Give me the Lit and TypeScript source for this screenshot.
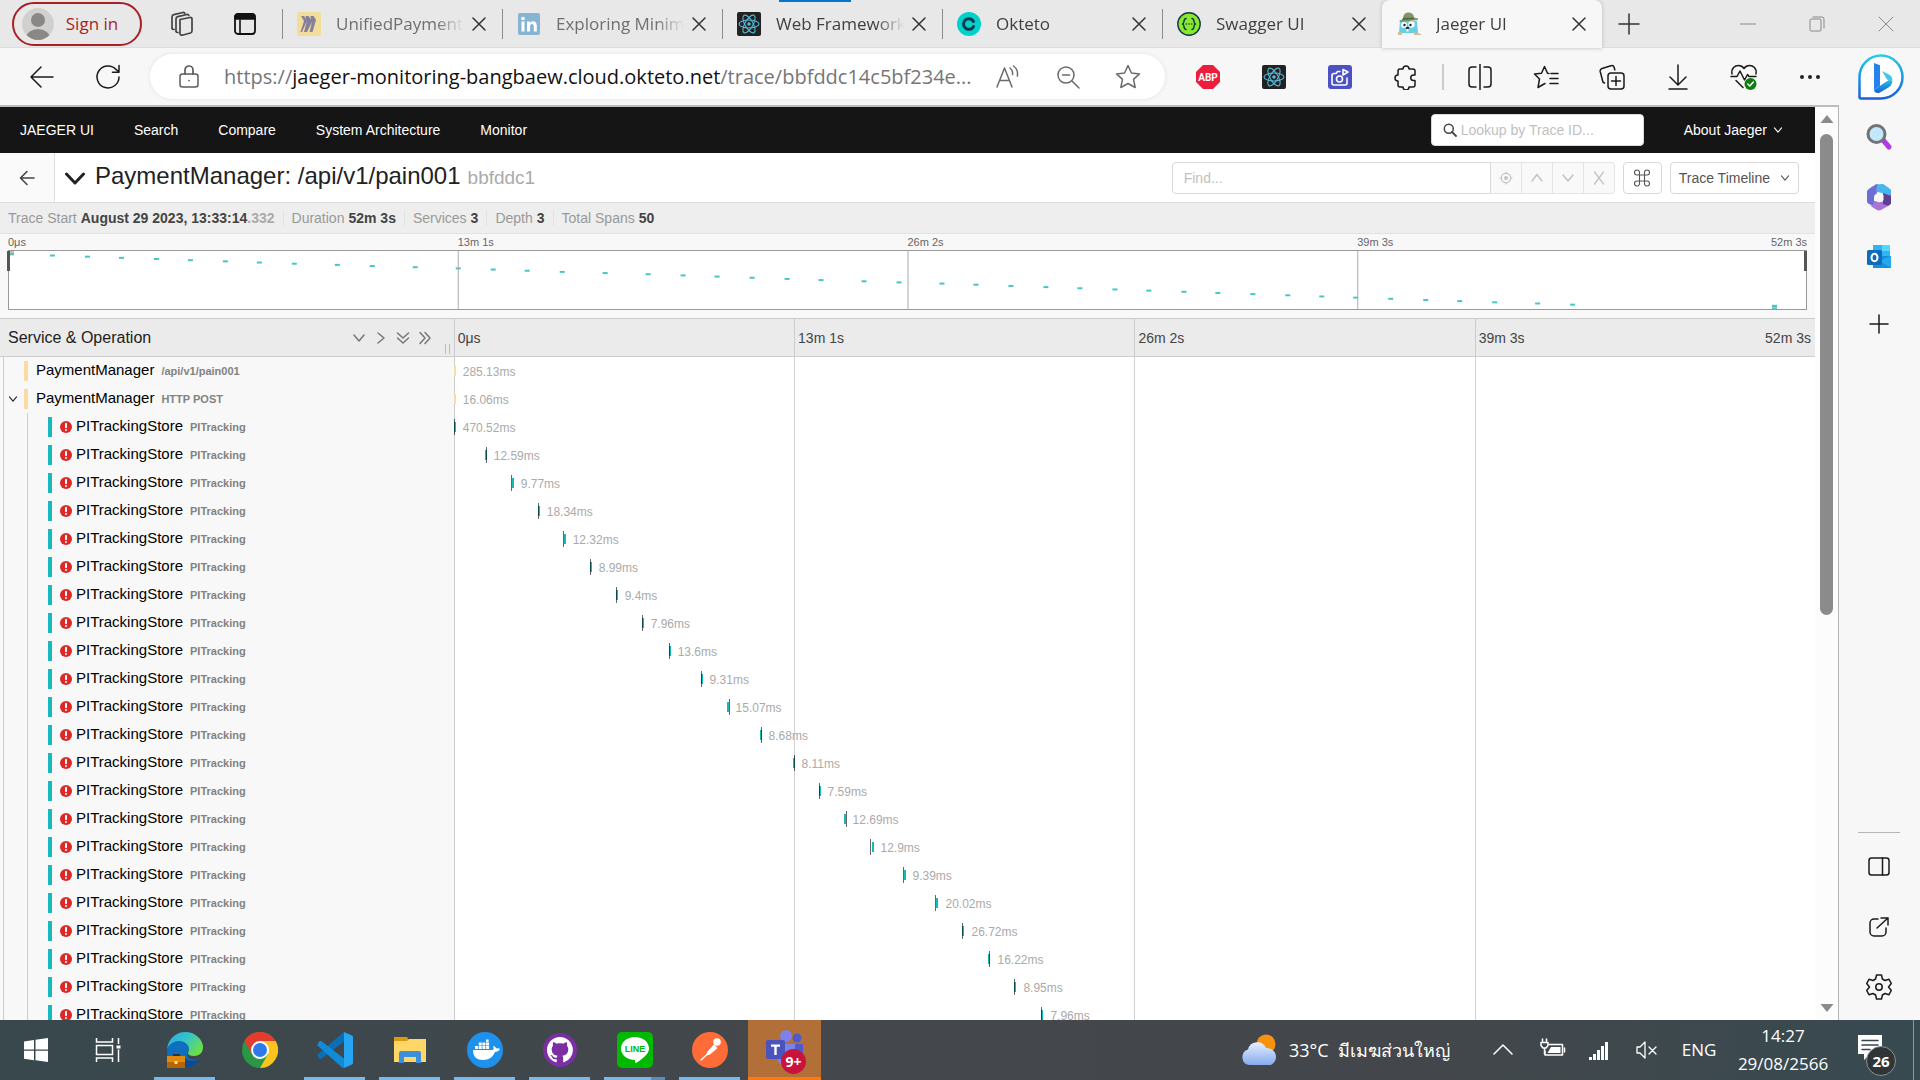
import { LitElement, html, svg, css, nothing, type TemplateResult } from "lit";
import { customElement, property } from "lit/decorators.js";
import { classMap } from "lit/directives/class-map.js";

const icon = (size: number, box: number, body: TemplateResult) =>
  html`<svg width=${size} height=${size} viewBox="0 0 ${box} ${box}" fill="none" stroke="currentColor" stroke-width="1.5" stroke-linecap="round" stroke-linejoin="round" aria-hidden="true">${body}</svg>`;

const reactMark = (bg: string) => svg`
  <rect width="24" height="24" rx="2" fill=${bg} stroke="none"/>
  <g stroke="#58b8d8" stroke-width="1.1">
    <ellipse cx="12" cy="12" rx="10" ry="4"/>
    <ellipse cx="12" cy="12" rx="10" ry="4" transform="rotate(60 12 12)"/>
    <ellipse cx="12" cy="12" rx="10" ry="4" transform="rotate(120 12 12)"/>
  </g>
  <circle cx="12" cy="12" r="1.8" fill="#58b8d8" stroke="none"/>`;

const cross = svg`<path d="M1 1L13 13M13 1L1 13"/>`;
const chevDown = svg`<path d="M2 4L7 10L12 4"/>`;

const icons = {
  miro: icon(24, 24, svg`<rect width="24" height="24" rx="2" fill="#f2dd9a" stroke="none"/><path d="M4 4h3l2 3-.5-3h3l2.3 3.5L13.400 4h3.200L19 8l-3.500 12h-3l2.500-10-5 10h-3l2.800-11L5 20H3.500L7 9z" fill="#85809c" stroke="none"/>`),
  linkedin: icon(24, 24, svg`<rect x="1" y="1" width="22" height="22" rx="2" fill="#86b5d2" stroke="none"/><g fill="#fff" stroke="none"><circle cx="6" cy="6.500" r="1.800"/><rect x="4.500" y="9.500" width="3" height="10"/><path d="M10 9.500h3v1.400c1.700-2.600 6.800-2.200 6.800 2.600v6h-3v-5.300c0-3-3.700-2.800-3.700 0v5.300H10z"/></g>`),
  react: icon(24, 24, reactMark("#222")),
  okteto: icon(24, 24, svg`<circle cx="12" cy="12" r="12" fill="#00d1ca" stroke="none"/><path d="M16.500 9.500A5.300 5.300 0 1 0 16.500 14.500" stroke="#10374f" stroke-width="3"/>`),
  swagger: icon(24, 24, svg`<circle cx="12" cy="12" r="11.200" fill="#85ea2d" stroke="#173647" stroke-width="1.400"/><g stroke="#173647" stroke-width="1.500"><path d="M9 6.500c-3 0-1 5-3.500 5.500 2.500.500.500 5.500 3.500 5.500M15 6.500c3 0 1 5 3.500 5.500-2.500.500-.500 5.500-3.500 5.500"/><path d="M9.300 12h.1M12 12h.1M14.700 12h.1"/></g>`),
  jaeger: icon(24, 24, svg`<g stroke="none"><path d="M3 9h17l1 12H2z" fill="#65cfe4"/><path d="M1 20h4v3H1zM17 20l7 2v1h-7z" fill="#d3bb93"/><path d="M6 7c0-4 2-7 6-6.500 4 .500 5 3 5 5l4 1v1.500L4 10l-2-1z" fill="#7f9766"/><path d="M6 6l11-.500v1.800L5 8z" fill="#54694b"/><circle cx="7" cy="13" r="3" fill="#fff"/><circle cx="14.500" cy="12.500" r="3.200" fill="#fff"/><circle cx="7.500" cy="13" r="1.200" fill="#222"/><circle cx="13.500" cy="13" r="1.200" fill="#222"/><ellipse cx="10.500" cy="16" rx="1.800" ry="1.200" fill="#333"/><path d="M9.500 17h2v2.500h-2z" fill="#fff"/></g>`),
  workspaces: icon(28, 28, svg`<g stroke="#444" stroke-width="1.700"><path d="M13 9.500l10-2c1-.200 2 .500 2 1.500v12c0 1-.500 1.500-1.500 2L16 25c-1.500.500-3 0-3-1.500z"/><path d="M9 20.500V9c0-1 .500-2 1.800-2.300L20 4.500c1-.200 1.500 0 1.800 1"/><path d="M5 18V7c0-1 .500-2 1.800-2.300L16 2.500c1-.200 1.500 0 1.800 1"/><path d="M5 18.500c.500 1 1.500 1 2 1M9 21.500c.500 1 1.500 1 2 1"/></g>`),
  tabActions: icon(24, 24, svg`<rect x="2" y="2" width="20" height="20" rx="3" stroke="#111" stroke-width="1.800"/><path d="M2 7V5a3 3 0 0 1 3-3h14a3 3 0 0 1 3 3v2z" fill="#111" stroke="#111"/><path d="M7 8v14" stroke="#111" stroke-width="1.600"/>`),
  close: icon(14, 14, cross),
  clear: icon(14, 14, svg`<path d="M2.500 1l9 12M11.500 1l-9 12" stroke-width="1.300"/>`),
  plus: icon(22, 22, svg`<path d="M11 1v20M1 11h20"/>`),
  minimize: icon(16, 16, svg`<path d="M0 8h16" stroke-width="1"/>`),
  restore: icon(16, 16, svg`<path d="M1 4a1 1 0 0 1 1-1h9a1 1 0 0 1 1 1v10a1 1 0 0 1-1 1H2a1 1 0 0 1-1-1zM4 1h9a2 2 0 0 1 2 2v9" stroke-width="1"/>`),
  winClose: icon(16, 16, svg`<path d="M1 1L15 15M15 1L1 15" stroke-width="1"/>`),
  back: icon(26, 26, svg`<path d="M24 13H2M12 3L2 13l10 10"/>`),
  reload: icon(28, 28, svg`<path d="M25 14a11 11 0 1 1-3-7.600L25 9M25 2.500V9.300H18.500"/>`),
  lock: icon(26, 26, svg`<g stroke="#5c5c5c"><rect x="4" y="10" width="18" height="13" rx="2.500"/><path d="M9 10V6a4 4 0 0 1 8 0v4M13 16.500h.1" stroke-width="1.700"/></g>`),
  readAloud: icon(26, 26, svg`<g stroke="#6b6b6b"><path d="M2 23L9.500 4 17 23M5 16.500h9"/><path d="M15 4c2 1.500 3 4 2.500 6.500M18.500 2c3.500 2.500 4.500 6.500 3.800 10"/></g>`),
  zoomOut: icon(26, 26, svg`<g stroke="#6b6b6b"><circle cx="11" cy="11" r="8"/><path d="M17 17l7 7M7.500 11h7"/></g>`),
  star: icon(28, 28, svg`<path stroke="#6b6b6b" d="M14 2.500l3.400 7.500 8.100.900-6 5.500 1.700 8.100L14 20.500l-7.200 4 1.700-8.100-6-5.500 8.100-.900z"/>`),
  abp: icon(26, 26, svg`<path d="M8 1h10l7 7v10l-7 7H8l-7-7V8z" fill="#ee1c3c" stroke="none"/><text x="13" y="17" font-size="10" font-weight="bold" font-family="Roboto, sans-serif" text-anchor="middle" fill="#fff" stroke="none">ABP</text>`),
  shot: icon(24, 24, svg`<rect width="24" height="24" rx="3" fill="#4c52c4" stroke="none"/><g stroke="#fff" stroke-width="1.600"><path d="M12 6.500H9.500L8 8.500H6a2 2 0 0 0-2 2V18a2 2 0 0 0 2 2h11a2 2 0 0 0 2-2v-5"/><circle cx="11.500" cy="14" r="3"/><path d="M15 4.500l5 2.500-5 3z"/></g>`),
  puzzle: icon(26, 26, svg`<path d="M10 5a3 3 0 0 1 6 0h4a2 2 0 0 1 2 2v4h-1.500a2.500 2.500 0 0 0 0 5.500H22V21a2 2 0 0 1-2 2h-4a3 3 0 0 1-6 0H7a2 2 0 0 1-2-2v-4a3 3 0 0 1 0-6V7a2 2 0 0 1 2-2z"/>`),
  split: icon(26, 26, svg`<path d="M9 3H5a3 3 0 0 0-3 3v14a3 3 0 0 0 3 3h4M17 3h4a3 3 0 0 1 3 3v14a3 3 0 0 1-3 3h-4M13 0v26"/>`),
  favorites: icon(26, 26, svg`<path d="M16 9.500l-1.500-.200L11.500 2.500 8.500 9.300 1.500 10l5 5-1.500 8.500 6-3.500 1-.500M18 9.500h7M17 14.500h8M17 19.500h8"/>`),
  collections: icon(26, 26, svg`<rect x="9" y="9" width="16" height="16" rx="3"/><path d="M17 12.500v9M12.500 17h9M5.500 19l-1.500-.700L1.200 7.500C.900 6 1.500 5 3 4.500l9-2.800c1.500-.400 2.700.200 3.100 1.500l.700 2.600"/>`),
  download: icon(26, 26, svg`<path d="M13 1v19M5 13l8 8 8-8M4 25h18"/>`),
  heart: icon(28, 28, svg`<path d="M2 11C1 5 5 2.500 8.500 2.500c2.500 0 4.500 1.500 5.500 3 1-1.500 3-3 5.500-3C23 2.500 27 5 26 11M1 13.500h6L10 8l4.500 9 3-5.500 1.500 2H26M6 17.500l7 7"/><circle cx="20.500" cy="21" r="6" fill="#107c10" stroke="none"/><path d="M17.800 21l2 2 3.500-4" stroke="#fff"/>`),
  dots: icon(24, 24, svg`<g fill="#222" stroke="none"><circle cx="4" cy="12" r="2"/><circle cx="12" cy="12" r="2"/><circle cx="20" cy="12" r="2"/></g>`),
  bing: icon(46, 46, svg`<defs><linearGradient id="bg1" x1="0" y1="0" x2="0" y2="1"><stop offset="0" stop-color="#23cde8"/><stop offset="1" stop-color="#1b5fdc"/></linearGradient></defs><path d="M1.500 43V23A21.500 21.500 0 1 1 23 44.500H3A1.500 1.500 0 0 1 1.500 43z" fill="#fff" stroke="url(#bg1)" stroke-width="2.500"/><g stroke="none"><path d="M16 9l6 2.200v20.500l-6 4.300z" fill="#2582ee"/><path d="M16 36l6-4.300L34 24c1 5-1 8-3.500 9.500L22 38.500c-3 1.300-5.500 0-6-2.500z" fill="url(#bg1)"/><path d="M24 17l7 3.500c3 1.700 4 4 2.500 7.500L29 25.500z" fill="#47c7e8"/></g>`),
  sideSearch: icon(28, 28, svg`<path d="M18 17l6 7" stroke="#b13be0" stroke-width="5"/><circle cx="11.500" cy="11" r="8.500" fill="#c4e8fa" stroke="#707377" stroke-width="3"/>`),
  m365: icon(28, 28, svg`<g stroke="none"><path d="M10 1.500L18 1c1 .500 7 4.500 8 6v9l-9-6-5-1z" fill="#47b5ee"/><path d="M2 8.500C2 7 9 1.500 13 1c-2 3-1 7-1 9l-3 4v9l-5-2c-2-1-2-2-2-4z" fill="#6a6fd6"/><path d="M9 18l8 1 9-9v9c0 2-1 3-2 3.500L16 27c-2 .700-3 .500-5-.500l-6-4c3 .500 4-1 4-4.500z" fill="#a974d6"/><path d="M18 10l8 3v7c-1 3-4 3-8 1z" fill="#5f3e96"/><path d="M14 9.500l4.500 2.500v5L14 19.500 9.500 17v-5z" fill="#f7f7f7"/></g>`),
  outlook: icon(26, 26, svg`<g stroke="none"><rect x="7" y="1" width="17" height="12" fill="#33b4ee"/><path d="M7 12h18v12H7z" fill="#1490df"/><path d="M25 12v12L13 17z" fill="#28a8ea"/><rect x="16" y="1" width="8" height="6" fill="#50d9ff"/><rect x="1" y="6" width="15" height="15" rx="1.500" fill="#0f6cbd"/></g><ellipse cx="8.500" cy="13.500" rx="3" ry="3.700" stroke="#fff" stroke-width="2"/>`),
  sidePlus: icon(20, 20, svg`<path d="M10 1v18M1 10h18"/>`),
  panel: icon(24, 24, svg`<rect x="2" y="3" width="20" height="17" rx="2.500"/><path d="M15.500 3v17"/>`),
  external: icon(24, 24, svg`<path d="M11 4H7a4 4 0 0 0-4 4v9a4 4 0 0 0 4 4h8a4 4 0 0 0 4-4v-4M14 3h7v7M21 3L10 13"/>`),
  gear: icon(28, 28, svg`<path d="M11.500 2h5l.900 4 2.600 1.500 4-1.200 2.300 4.200-2.800 3.500 2.800 3.500-2.300 4.200-4-1.200-2.600 1.500-.900 4h-5l-.900-4L8 20.500l-4 1.200-2.300-4.200L4.500 14 1.700 10.500 4 6.300l4 1.200L10.600 6z"/><circle cx="14" cy="14" r="3.200"/>`),
  appBack: icon(16, 16, svg`<path d="M15 8H2M8 1.500L1.500 8 8 14.500" stroke-width="1.600"/>`),
  bigChev: icon(20, 20, svg`<path d="M1.500 6L10 15l8.500-9" stroke-width="3"/>`),
  lens: icon(14, 14, svg`<circle cx="5.800" cy="5.800" r="4.500" stroke="#444"/><path d="M9 9l4 4" stroke="#444" stroke-width="1.800"/>`),
  chev: icon(10, 14, chevDown),
  down: icon(14, 14, chevDown),
  up: icon(14, 14, svg`<path d="M2 10L7 3.500 12 10"/>`),
  right: icon(14, 14, svg`<path d="M4 2l6 5-6 5"/>`),
  dblDown: icon(14, 14, svg`<path d="M1.500 2L7 7l5.500-5M1.500 7L7 12l5.500-5"/>`),
  dblRight: icon(14, 14, svg`<path d="M2 1.500L7 7l-5 5.500M7 1.500L12 7l-5 5.500"/>`),
  aim: icon(14, 14, svg`<circle cx="7" cy="7" r="4.700" stroke-width="1.200"/><circle cx="7" cy="7" r="2" fill="currentColor" stroke="none"/><path d="M7 1v1.500M7 11.500V13M1 7h1.500M11.500 7H13" stroke-width="1.200"/>`),
  error: icon(12, 12, svg`<circle cx="6" cy="6" r="6" fill="#db2828" stroke="none"/><path d="M6 2.800v3.400M6 8.900v.1" stroke="#fff" stroke-width="1.900"/>`),
  command: icon(18, 18, svg`<path d="M6 6H4a2.500 2.500 0 1 1 2.500-2.500v11A2.500 2.500 0 1 1 4 12h10a2.500 2.500 0 1 1-2.500 2.500v-11A2.500 2.500 0 1 1 14 6z" stroke-width="1.100"/>`),
  arrowUp: icon(14, 14, svg`<path d="M7 3l6.500 8H.500z" fill="#8b8b8b" stroke="none"/>`),
  arrowDown: icon(14, 14, svg`<path d="M7 11l6.500-8H.500z" fill="#8b8b8b" stroke="none"/>`),
  windows: icon(26, 26, svg`<path d="M1 4.500l10-1.500v9.500H1zM12.500 2.800L25 1v11.500H12.500zM1 13.800h10v9.500L1 21.800zM12.500 13.800H25V25l-12.500-1.800z" fill="#fff" stroke="none"/>`),
  taskView: icon(26, 26, svg`<g stroke="#fff" stroke-linecap="butt" stroke-linejoin="miter"><path d="M1.500 1v4h16V1M1.500 25v-4h16v4M1.500 8.500h16v9h-16zM23.500 1v6M23.500 12.500V25"/><path d="M21.500 8.500h4v3h-4z" fill="#fff" stroke="none"/></g>`),
  edge: icon(36, 36, svg`<defs><linearGradient id="eg1" x1="0" y1="0" x2="1" y2=".6"><stop offset="0" stop-color="#2ba6e8"/><stop offset=".5" stop-color="#33c4cc"/><stop offset="1" stop-color="#6be048"/></linearGradient></defs><g stroke="none"><path d="M0 20C0 12 6 9 12 9c7 0 10 4 10 8 0 2-2 3-2 6 0 4 6 6 13 4-3 6-9 9-15 9C8 36 0 29 0 20z" fill="#0e6fc0"/><path d="M18 26c4 4 10 3 15.500 1C30 33 24 36 18 36z" fill="#104a8e"/><path d="M0 17C1 7 9 0 18 0c11 0 18 8 18 15 0 6-4 9-9 9-4 0-6-1-6-3 0-1 1-1 1-4 0-4-4-8-10-8-5 0-10 3-12 8z" fill="url(#eg1)"/><path d="M6 24v-2h7v2" fill="#333"/><rect y="24" width="18" height="12" fill="#b86409"/><rect y="24" width="18" height="6" fill="#e08a0d"/><rect x="7.500" y="29" width="3" height="3" fill="#ffe36b"/></g>`),
  chrome: icon(36, 36, svg`<g stroke="none"><circle cx="18" cy="18" r="18" fill="#2a9745"/><path d="M2.400 9A18 18 0 0 1 33.600 9H18L10.200 22.500z" fill="#e33b2e"/><path d="M33.600 9A18 18 0 0 1 18 36l7.800-13.500L18 9z" fill="#fcc31e"/><circle cx="18" cy="18" r="9" fill="#fff"/><circle cx="18" cy="18" r="7" fill="#2f7ae9"/></g>`),
  vscode: icon(36, 36, svg`<g stroke="none"><path d="M1 24.500c-1-.900-1-1.800 0-2.600L27 0v9.500L4.500 26.700c-.800.500-1.500.400-2 0z" fill="#0a6fb5"/><path d="M1 11.500c-1 .900-1 1.800 0 2.600L25 35.500c1 .700 2 .500 2 .500V26.500L4.500 9.300c-.800-.500-1.500-.400-2 0z" fill="#0f8bd8"/><path d="M27 0l8 3.500c.600.300 1 .900 1 1.500v26c0 .600-.400 1.200-1 1.500L27 36z" fill="#26a5f2"/></g>`),
  explorer: icon(36, 36, svg`<g stroke="none"><path d="M2 5h13l2 3v5H2z" fill="#dc9a0a"/><path d="M2 9h13l2-2h17v23H2z" fill="#ffd668"/><path d="M7 31V21a2 2 0 0 1 2-2h18a2 2 0 0 1 2 2v10h-5v-6H12v6z" fill="#3b8fdc"/></g>`),
  docker: icon(36, 36, svg`<g stroke="none"><circle cx="18" cy="18" r="18" fill="#1d91ec"/><path d="M6 18h20c1-1 .500-3 0-4 2 0 3 1.500 3 2.500 1.500-.300 3-.300 4 .500-1 2-3 3-5 3-2 5-6 8-12 8-6 0-10-3-10-10z" fill="#fff"/><path d="M8 14h3v3H8zM11.700 14h3v3h-3zM15.400 14h3v3h-3zM19.100 14h3v3h-3zM11.700 10.500h3v3h-3zM15.400 10.500h3v3h-3zM19.100 10.500h3v3h-3zM19.100 7.500h2.500v2.500h-2.500z" fill="#fff"/></g>`),
  github: icon(34, 34, svg`<circle cx="17" cy="17" r="17" fill="#7b2fa3" stroke="none"/><path transform="translate(4 4) scale(1.620)" fill="#fff" stroke="none" d="M8 0C3.580 0 0 3.580 0 8c0 3.540 2.290 6.530 5.470 7.590.4.070.55-.17.55-.38 0-.19-.01-.82-.01-1.490-2.010.37-2.530-.49-2.690-.94-.09-.23-.48-.94-.82-1.130-.28-.15-.68-.52-.01-.53.63-.01 1.080.58 1.230.82.72 1.210 1.870.87 2.330.66.07-.52.28-.87.51-1.070-1.780-.2-3.640-.89-3.640-3.950 0-.87.31-1.590.82-2.150-.08-.2-.36-1.020.08-2.120 0 0 .67-.21 2.200.82.64-.18 1.320-.27 2-.27s1.360.09 2 .27c1.530-1.040 2.200-.82 2.200-.82.44 1.100.16 1.920.08 2.120.51.56.82 1.270.82 2.150 0 3.070-1.870 3.750-3.650 3.950.29.25.54.73.54 1.480 0 1.070-.01 1.930-.01 2.200 0 .21.15.46.55.38A8.010 8.010 0 0 0 16 8c0-4.420-3.580-8-8-8z"/>`),
  line: icon(36, 36, svg`<g stroke="none"><rect width="36" height="36" rx="5" fill="#00b900"/><path d="M18 5c8 0 14 5 14 11.500 0 5-5 9.500-13 14.500-1 .500-1-1-1-3C10 28 4 23 4 16.500 4 10 10 5 18 5z" fill="#fff"/><text x="18" y="20" font-size="9" font-weight="bold" font-family="Liberation Sans, sans-serif" text-anchor="middle" fill="#00b900">LINE</text></g>`),
  postman: icon(36, 36, svg`<circle cx="18" cy="18" r="18" fill="#ff6c37" stroke="none"/><g stroke="#fff"><circle cx="25" cy="10" r="3" fill="#fff"/><path d="M22 13.500L16 20l-1 2.500 2.500-.500 7-6z" fill="#fff"/><path d="M15 22.500L9 28"/></g>`),
  teams: icon(42, 42, svg`<g stroke="none"><circle cx="22" cy="7" r="6" fill="#7b83eb"/><circle cx="33" cy="9" r="4.500" fill="#5059c9"/><path d="M28 15h11v10a7 7 0 0 1-9 6z" fill="#5059c9"/><path d="M13 15h18v13a9 9 0 0 1-18 0z" fill="#7b83eb"/><rect x="2" y="11" width="19" height="19" rx="2" fill="#4b53bc"/><path d="M7 15.500h9v2.300h-3.300V26h-2.400v-8.200H7z" fill="#fff"/></g>`),
  weather: icon(38, 38, svg`<defs><linearGradient id="wc" x1="0" y1="0" x2="0" y2="1"><stop offset="0" stop-color="#e6f0fd"/><stop offset="1" stop-color="#86abef"/></linearGradient></defs><g stroke="none"><circle cx="26" cy="13" r="9.500" fill="#f6920c"/><path d="M9 34a8 8 0 0 1-1-15.500A9.500 9.500 0 0 1 26 17a9 9 0 0 1 5 17z" fill="url(#wc)"/></g>`),
  trayUp: icon(20, 20, svg`<path d="M1 14L10 5l9 9" stroke="#fff"/>`),
  battery: icon(26, 26, svg`<g stroke="#fff"><path d="M9 7.500h13.500v10.500H5v-4" /><path d="M24.500 11v4"/><path d="M11 10h9.500v6H7.500z" fill="#fff" stroke="none"/><path d="M2.500 2v3M6.500 2v3M1 5.500h7v3L6 11H3L1 8.500zM4.500 11v6"/></g>`),
  signal: icon(20, 20, svg`<path d="M0 17h3v3H0zM4 14h3v6H4zM8 10h3v10H8zM12 6h3v14h-3zM16 2h3v18h-3z" fill="#fff" stroke="none"/>`),
  mute: icon(22, 22, svg`<path d="M1 8h3l5-5v16l-5-5H1zM13 8l7 7M20 8l-7 7" stroke="#fff" stroke-width="1.300"/>`),
  notes: icon(26, 26, svg`<path d="M1 1h24v19H13l-6 6v-6H1z" fill="#fff" stroke="none"/><path d="M5 6.500h16M5 11h16M5 15.500h8" stroke="#3a464b"/>`),
};

type IconName = keyof typeof icons;

interface BrowserTab { title: string; icon: IconName; dim?: boolean; active?: boolean }

const tabs: BrowserTab[] = [
  { title: "UnifiedPayment", icon: "miro", dim: true },
  { title: "Exploring Minim", icon: "linkedin", dim: true },
  { title: "Web Framework", icon: "react" },
  { title: "Okteto", icon: "okteto" },
  { title: "Swagger UI", icon: "swagger" },
  { title: "Jaeger UI", icon: "jaeger", active: true },
];

interface Span { service: string; op: string; duration: string; start: number; log?: number; depth: number; open?: boolean }

/* start and log are positions on the time axis, in 1/1361 of the trace duration. */
const child = (start: number, log: number, duration: string): Span =>
  ({ service: "PITrackingStore", op: "PITracking", duration, start, log, depth: 2 });

const spans: Span[] = [
  { service: "PaymentManager", op: "/api/v1/pain001", duration: "285.13ms", start: 0, depth: 0 },
  { service: "PaymentManager", op: "HTTP POST", duration: "16.06ms", start: 0, depth: 0, open: true },
  child(0, 0, "470.52ms"), child(31, 32, "12.59ms"), child(58, 57, "9.77ms"), child(84, 84, "18.34ms"),
  child(110, 109, "12.32ms"), child(136, 136, "8.99ms"), child(162, 162, "9.4ms"), child(188, 188, "7.96ms"),
  child(215, 215, "13.6ms"), child(247, 247, "9.31ms"), child(273, 275, "15.07ms"), child(306, 307, "8.68ms"),
  child(339, 340, "8.11ms"), child(365, 365, "7.59ms"), child(390, 392, "12.69ms"), child(418, 416, "12.9ms"),
  child(450, 449, "9.39ms"), child(483, 482, "20.02ms"), child(509, 509, "26.72ms"), child(535, 536, "16.22ms"),
  child(561, 561, "8.95ms"), child(588, 588, "7.96ms"),
];

const AXIS = 1361;
const ticks = ["0μs", "13m 1s", "26m 2s", "39m 3s"];

/* Start of each span in the minimap, in 1/1798 of the trace duration. */
const miniStarts = [
  0, 0, 0, 41, 76, 110, 145, 179, 214, 248, 283, 326, 361, 404, 447, 482, 516, 551, 594,
  637, 672, 706, 741, 776, 810, 853, 888, 931, 965, 1000, 1035, 1069, 1104, 1138, 1173, 1207, 1242,
  1277, 1311, 1345, 1380, 1415, 1449, 1484, 1527, 1562, 1764, 1764, 1764, 1764,
];

@customElement("browser-tab")
class BrowserTabElement extends LitElement {
  @property({ attribute: false }) tab!: BrowserTab;

  static styles = css`
    :host { display: flex; flex: 0 1 220px; min-width: 0; align-items: center; }
    .tab { display: flex; flex: 1; min-width: 0; align-items: center; height: 48px; padding-right: 16px; box-sizing: border-box; }
    .tab.active { background: #f7f7f7; border-radius: 8px 8px 0 0; box-shadow: 0 0 4px #bbb; }
    .rule { width: 1px; height: 30px; background: #8d8d8d; margin-right: 14px; }
    .active .rule { background: none; }
    .link { display: flex; flex: 1; min-width: 0; align-items: center; gap: 15px; color: #3f3f3f; text-decoration: none; }
    .title { flex: 1; min-width: 0; overflow: hidden; white-space: nowrap; mask-image: linear-gradient(90deg, #000 calc(100% - 28px), transparent); }
    .dim .title { color: #6f6f6f; }
    .close { display: flex; margin-left: 8px; padding: 0; border: 0; background: none; color: #333; }
  `;

  render() {
    const t = this.tab;
    return html`<div class=${classMap({ tab: true, active: !!t.active, dim: !!t.dim })}>
      <span class="rule"></span>
      <a class="link" href="#">${icons[t.icon]}<span class="title">${t.title}</span></a>
      <button class="close" aria-label="Close ${t.title}">${icons.close}</button>
    </div>`;
  }
}

@customElement("span-row")
class SpanRow extends LitElement {
  @property({ attribute: false }) span!: Span;

  static styles = css`
    :host { display: grid; grid-template-columns: 1fr 3fr; height: 28px; flex: none; }
    .name { display: flex; align-items: center; min-width: 0; background: #f8f8f8; padding-left: 3px; white-space: nowrap; }
    .guide { display: flex; align-items: center; width: 20px; height: 28px; border-left: 1px solid #ccc; }
    .inner { margin-left: 3px; }
    .toggle { display: flex; margin-left: 4px; padding: 0; border: 0; background: none; color: #222; }
    .label { display: flex; align-items: baseline; gap: 7px; padding: 0 0 2px 8px; color: #000; font: 15px/20px "Liberation Sans", Arial, sans-serif; text-decoration: none; }
    .bar { width: 4px; height: 20px; background: #17b8be; }
    .root .bar { background: #f8dca1; }
    .error { display: flex; margin-left: 8px; }
    .error + .label { padding-left: 4px; }
    .op { color: #828282; font-size: 11px; font-weight: bold; }
    .view { position: relative; display: flex; align-items: center; border-left: 1px solid #ccc; color: #aaa; font-size: 12px; }
    .time { margin-left: var(--at); padding: 1px 0 0 8px; }
    .mark { position: absolute; left: calc(var(--at) - 1px); top: 9px; width: 2px; height: 10px; background: #17b8be; }
    .root .mark { background: #f8dca1; }
    .log { position: absolute; left: calc(var(--log) - 1px); top: 6px; width: 1px; height: 16px; background: rgba(0, 0, 0, 0.6); }
  `;

  render() {
    const s = this.span;
    const at = `--at:${(s.start / AXIS) * 100}%;--log:${((s.log ?? 0) / AXIS) * 100}%`;
    const root = s.depth === 0;
    return html`
      <div class=${classMap({ name: true, root })}>
        <span class="guide">${s.open ? html`<button class="toggle" aria-label="Collapse children">${icons.chev}</button>` : nothing}</span>
        ${root ? nothing : html`<span class="guide inner"></span>`}
        <span class="bar"></span>
        ${root ? nothing : html`<span class="error">${icons.error}</span>`}
        <a class="label" href="#"><span>${s.service}</span><span class="op">${s.op}</span></a>
      </div>
      <div class=${classMap({ view: true, root })} style=${at}>
        <span class="mark"></span>
        ${s.log === undefined ? nothing : html`<span class="log"></span>`}
        <span class="time">${s.duration}</span>
      </div>`;
  }
}

@customElement("trace-page")
class TracePage extends LitElement {
  static styles = css`
    :host { display: flex; flex-direction: column; flex: 1; min-width: 0; min-height: 0; overflow: hidden; background: #fff; font: 14px/20px "Liberation Sans", Arial, sans-serif; color: #222; }
    a { color: inherit; text-decoration: none; }
    button, input { font: inherit; box-sizing: border-box; }
    .nav { display: flex; align-items: center; flex: none; height: 46px; background: #151515; color: #fff; }
    .nav a { padding: 0 20px; }
    .nav .about { display: flex; align-items: center; gap: 6px; padding: 0 32px 0 40px; }
    .grow { flex: 1; }
    .lookup { display: flex; align-items: center; gap: 4px; width: 213px; height: 32px; padding: 0 11px; box-sizing: border-box; border: 1px solid #d9d9d9; border-radius: 4px; background: #fff; }
    .lookup input { flex: 1; min-width: 0; padding: 0; border: 0; background: none; }
    input::placeholder { color: #bfbfbf; opacity: 1; }
    .head { display: flex; align-items: center; flex: none; height: 50px; box-sizing: border-box; border-bottom: 1px solid #ddd; padding-right: 16px; }
    .back { display: flex; align-items: center; justify-content: center; align-self: stretch; width: 54px; border-right: 1px solid #ddd; background: #fafafa; color: #444; }
    h1 { display: flex; align-items: baseline; flex: 1; gap: 7px; margin: 0; font-size: 24px; line-height: 32px; font-weight: normal; padding-bottom: 1px; }
    h1 small { font-size: 19px; color: #aaa; }
    .expand { display: flex; border: 0; padding: 0 10px; background: none; color: #222; }
    .find { display: flex; width: 443px; height: 32px; margin-right: 8px; }
    .find input { flex: 1; min-width: 0; padding: 0 11px; border: 1px solid #d9d9d9; border-radius: 4px 0 0 4px; }
    .find button { display: flex; align-items: center; justify-content: center; width: 31px; padding: 0; border: 1px solid #e4e4e4; border-left: 0; background: #f9f9f9; color: #c4c4c4; }
    .find button:last-child { border-radius: 0 4px 4px 0; }
    .tool { display: flex; align-items: center; justify-content: center; gap: 10px; height: 32px; padding: 0 8px; border: 1px solid #d9d9d9; border-radius: 4px; background: #fff; color: #555; }
    .keys { width: 39px; margin-right: 8px; }
    .facts { display: flex; flex: none; height: 31px; margin: 0; padding: 0 8px; align-items: center; background: #eee; border-bottom: 1px solid #e2e2e2; box-sizing: border-box; color: #999; }
    .facts div { display: flex; gap: 4px; padding: 0 8px; border-left: 1px solid #e2e2e2; line-height: 16px; }
    .facts div:first-child { padding-left: 0; border: 0; }
    dd { margin: 0; font-weight: bold; color: #444; }
    dd i { color: #aaa; font-style: normal; }
    .mini { flex: none; padding: 0 8px 8px; background: #f8f8f8; }
    .labels { display: grid; grid-template-columns: repeat(4, 1fr); height: 16px; font-size: 11px; line-height: 16px; color: #666; }
    .labels span { display: flex; justify-content: space-between; }
    .labels b { font-weight: normal; }
    .map { display: flex; position: relative; height: 60px; box-sizing: border-box; border: 1px solid #999; background: #fff; }
    .map svg { width: 100%; height: 58px; }
    .map::before, .map::after { content: ""; position: absolute; top: 0; width: 3px; height: 20px; background: #555; }
    .map::before { left: -2px; }
    .map::after { right: -1px; }
    .axis { display: grid; grid-template-columns: 1fr 3fr; flex: none; height: 39px; box-sizing: border-box; border-top: 1px solid #ccc; border-bottom: 1px solid #ccc; background: #ebebeb; }
    .svc { display: flex; align-items: center; gap: 8px; padding: 0 4px 0 8px; min-width: 0; color: #777; }
    .svc h2 { flex: 1; margin: 0; font-size: 16px; font-weight: normal; color: #222; }
    .svc button { display: flex; padding: 0; border: 0; background: none; color: #777; }
    .grip { width: 3px; height: 10px; border: solid #bbb; border-width: 0 1px; align-self: flex-end; margin: 0 0 2px 5px; }
    .ticks { display: grid; grid-template-columns: repeat(4, 1fr); align-items: stretch; color: #444; }
    .ticks span { display: flex; align-items: center; justify-content: space-between; padding: 0 4px 0 3px; border-left: 1px solid #ccc; }
    .ticks b { font-weight: normal; }
    .rows { position: relative; display: flex; flex-direction: column; flex: 1; min-height: 0; overflow: hidden; }
    .grid { position: absolute; inset: 0 0 0 25%; display: grid; grid-template-columns: repeat(4, 1fr); }
    .grid i + i { border-left: 1px solid #d2d2d2; }
    span-row { position: relative; }
  `;

  render() {
    return html`
      <nav class="nav">
        ${["JAEGER UI", "Search", "Compare", "System Architecture", "Monitor"].map((n) => html`<a href="#">${n}</a>`)}
        <span class="grow"></span>
        <label class="lookup">${icons.lens}<input aria-label="Lookup by Trace ID" placeholder="Lookup by Trace ID..."></label>
        <a class="about" href="#">About Jaeger ${icons.chev}</a>
      </nav>
      <header class="head">
        <a class="back" href="#" aria-label="Back">${icons.appBack}</a>
        <button class="expand" aria-label="Toggle details">${icons.bigChev}</button>
        <h1>PaymentManager: /api/v1/pain001<small>bbfddc1</small></h1>
        <div class="find">
          <input aria-label="Find" placeholder="Find...">
          <button disabled aria-label="Focus match">${icons.aim}</button>
          <button disabled aria-label="Previous match">${icons.up}</button>
          <button disabled aria-label="Next match">${icons.down}</button>
          <button disabled aria-label="Clear">${icons.clear}</button>
        </div>
        <button class="tool keys" aria-label="Keyboard shortcuts">${icons.command}</button>
        <button class="tool">Trace Timeline ${icons.chev}</button>
      </header>
      <dl class="facts">
        <div><dt>Trace Start</dt><dd>August 29 2023, 13:33:14<i>.332</i></dd></div>
        <div><dt>Duration</dt><dd>52m 3s</dd></div>
        <div><dt>Services</dt><dd>3</dd></div>
        <div><dt>Depth</dt><dd>3</dd></div>
        <div><dt>Total Spans</dt><dd>50</dd></div>
      </dl>
      <section class="mini">
        <div class="labels">${ticks.map((t, i) => html`<span>${t}${i === 3 ? html`<b>52m 3s</b>` : nothing}</span>`)}</div>
        <div class="map">
          <svg viewBox="0 0 1798 58" preserveAspectRatio="none" aria-hidden="true">
            ${miniStarts.map((x, i) => svg`<rect x=${x} y=${i * 1.17} width="5" height="2" fill=${i < 2 || i === 48 ? "#d9b98a" : "#45c6cb"}/>`)}
            ${[1, 2, 3].map((i) => svg`<rect x=${i * 450 - 1} width="1" height="58" fill="#aaa"/>`)}
          </svg>
        </div>
      </section>
      <section class="axis">
        <div class="svc">
          <h2>Service &amp; Operation</h2>
          <button aria-label="Expand +1">${icons.down}</button>
          <button aria-label="Collapse +1">${icons.right}</button>
          <button aria-label="Expand all">${icons.dblDown}</button>
          <button aria-label="Collapse all">${icons.dblRight}</button>
          <span class="grip"></span>
        </div>
        <div class="ticks">${ticks.map((t, i) => html`<span>${t}${i === 3 ? html`<b>52m 3s</b>` : nothing}</span>`)}</div>
      </section>
      <section class="rows">
        <div class="grid"><i></i><i></i><i></i><i></i></div>
        ${spans.map((s) => html`<span-row .span=${s}></span-row>`)}
      </section>`;
  }
}

interface TaskApp { name: string; icon: IconName; state?: string; badge?: string }

const apps: TaskApp[] = [
  { name: "Edge", icon: "edge", state: "open" },
  { name: "Chrome", icon: "chrome" },
  { name: "Visual Studio Code", icon: "vscode", state: "open" },
  { name: "File Explorer", icon: "explorer", state: "open" },
  { name: "Docker", icon: "docker", state: "open" },
  { name: "GitHub", icon: "github", state: "open" },
  { name: "LINE", icon: "line", state: "stacked" },
  { name: "Postman", icon: "postman", state: "open" },
  { name: "Teams", icon: "teams", state: "alert", badge: "9+" },
];

@customElement("task-bar")
class TaskBar extends LitElement {
  static styles = css`
    :host { display: flex; flex: none; height: 60px; background: linear-gradient(90deg, #38484d, #44474b 40%, #43474b 75%, #374a50); color: #fff; font: 17px/24px "Open Sans", "Noto Sans", sans-serif; }
    button { display: flex; align-items: center; justify-content: center; position: relative; padding: 0; border: 0; background: none; color: inherit; font: inherit; }
    .sys { width: 72px; }
    .apps { display: flex; flex: 1; padding-left: 3px; }
    .app { width: 75px; border: solid transparent; border-width: 0 7px; box-sizing: border-box; }
    .app::after { content: ""; position: absolute; inset: auto 0 0; height: 3px; }
    .open::after { background: #76b9ed; }
    .stacked::after { background: linear-gradient(90deg, #76b9ed 47px, #5a8db8 47px); }
    .alert { width: 73px; border: 0; background: #b27038; margin-left: 1px; }
    .alert::after { background: #ff7a0a; }
    .badge { position: absolute; display: flex; align-items: center; justify-content: center; border-radius: 50%; font-weight: bold; }
    .alert .badge { left: 33px; top: 29px; width: 25px; height: 25px; background: #c8143c; font-size: 14px; }
    .weather { gap: 11px; padding-right: 28px; font-size: 18px; }
    .cell { width: 50px; }
    .volume { width: 54px; }
    .narrow { width: 42px; }
    .clock { flex-direction: column; width: 118px; line-height: 28px; }
    .note { width: 71px; padding: 0 15px 6px 0; }
    .note .badge { right: 17px; bottom: 4px; width: 28px; height: 28px; border: 1px solid #8b9294; background: #2f3436; font-size: 15px; line-height: 20px; }
    .desk { width: 6px; border-left: 1px solid #8e9698; }
  `;

  render() {
    return html`
      <button class="sys" aria-label="Start">${icons.windows}</button>
      <button class="sys" aria-label="Task view">${icons.taskView}</button>
      <div class="apps">${apps.map((a) => html`<button class="app ${a.state ?? ""}" aria-label=${a.name}>${icons[a.icon]}${a.badge ? html`<span class="badge">${a.badge}</span>` : nothing}</button>`)}</div>
      <button class="weather">${icons.weather}<span>33°C&nbsp; มีเมฆส่วนใหญ่</span></button>
      <button class="cell" aria-label="Hidden icons">${icons.trayUp}</button>
      <button class="cell" aria-label="Battery">${icons.battery}</button>
      <button class="narrow" aria-label="Network">${icons.signal}</button>
      <button class="volume" aria-label="Volume">${icons.mute}</button>
      <button class="cell">ENG</button>
      <button class="clock"><span>14:27</span><span>29/08/2566</span></button>
      <button class="note" aria-label="Notifications">${icons.notes}<span class="badge">26</span></button>
      <span class="desk"></span>`;
  }
}

@customElement("app-root")
class AppRoot extends LitElement {
  static styles = css`
    :host { display: flex; flex-direction: column; height: 100vh; overflow: hidden; background: #f7f7f7; color: #222; font: 17px/24px "Open Sans", "Noto Sans", sans-serif; }
    button { display: flex; align-items: center; justify-content: center; padding: 0; border: 0; background: none; color: inherit; font: inherit; }
    .strip { display: flex; flex: none; align-items: center; position: relative; height: 48px; background: #e8e8e8; padding-left: 12px; box-shadow: inset 0 -1px 0 #dcdcdc; }
    .loading { position: absolute; left: 779px; top: 0; width: 72px; height: 2px; background: #0078d7; }
    .signin { gap: 12px; width: 130px; height: 44px; padding: 0 18px 0 4px; border: 2px solid #a81f26; border-radius: 22px; color: #a81f26; white-space: nowrap; }
    .wide { width: 64px; height: 40px; }
    .lead { display: flex; padding: 0 5px 0 7px; }
    .new { width: 54px; color: #333; }
    .spacer { flex: 1; }
    .win { width: 69px; color: #888; }
    .bar { display: flex; flex: none; align-items: center; height: 57px; padding-left: 9px; }
    .tool { flex: none; width: 66px; height: 48px; color: #1b1b1b; }
    .rule { width: 2px; height: 26px; margin: 0 3px; background: #ccc; }
    .address { display: flex; flex: 1; min-width: 0; align-items: center; height: 45px; margin: 0 10px 0 9px; padding: 0 7px 0 26px; box-sizing: border-box; border-radius: 23px; background: #fff; box-shadow: 0 0 4px #e2e2e2; }
    .url { flex: 1; min-width: 0; margin-left: 22px; overflow: hidden; white-space: nowrap; font-size: 20px; color: #767676; outline: none; }
    .url b { color: #111; font-weight: normal; }
    .mini { width: 60px; }
    .bing { width: 75px; margin-right: 2px; }
    .body { display: flex; flex: 1; min-height: 0; }
    .frame { display: flex; flex: 1; min-width: 0; border-top: 2px solid #bdbdbd; border-right: 1px solid #b5b5b5; }
    .scroll { display: flex; flex-direction: column; align-items: center; width: 23px; padding: 5px 0; background: #fcfcfc; }
    .track { flex: 1; padding: 8px 0; }
    .thumb { width: 13px; height: 56%; border-radius: 7px; background: #8b8b8b; }
    .side { display: flex; flex-direction: column; align-items: center; width: 81px; padding: 2px 2px 3px 0; box-sizing: border-box; }
    .side button { width: 60px; height: 60px; color: #1b1b1b; }
    .side .add { margin-top: 7px; }
    .line { width: 42px; height: 1px; margin-bottom: 4px; background: #b5b5b5; }
  `;

  private tool(name: IconName, label: string, cls = "tool") {
    return html`<button class=${cls} aria-label=${label}>${icons[name]}</button>`;
  }

  render() {
    return html`
      <div class="strip">
        <span class="loading"></span>
        <button class="signin"><svg width="32" height="34" viewBox="0 0 32 34" aria-hidden="true"><clipPath id="av"><circle cx="16" cy="17" r="16"/></clipPath><circle cx="16" cy="17" r="16" fill="#d2d0ce"/><g fill="#8a8886" clip-path="url(#av)"><circle cx="16" cy="13" r="7"/><ellipse cx="16" cy="31" rx="12" ry="9"/></g></svg>Sign in</button>
        <div class="lead">${this.tool("workspaces", "Workspaces", "wide")}${this.tool("tabActions", "Tab actions", "wide")}</div>
        ${tabs.map((t) => html`<browser-tab .tab=${t}></browser-tab>`)}
        ${this.tool("plus", "New tab", "new")}
        <span class="spacer"></span>
        ${this.tool("minimize", "Minimize", "win")}${this.tool("restore", "Restore", "win")}${this.tool("winClose", "Close", "win")}
      </div>
      <div class="bar">
        ${this.tool("back", "Back")}${this.tool("reload", "Refresh")}
        <div class="address">
          ${icons.lock}
          <div class="url" role="textbox" contenteditable="true" aria-label="Address">https://<b>jaeger-monitoring-bangbaew.cloud.okteto.net</b>/trace/bbfddc14c5bf234e...</div>
          ${this.tool("readAloud", "Read aloud", "mini")}${this.tool("zoomOut", "Zoom", "mini")}${this.tool("star", "Add to favorites", "mini")}
        </div>
        ${this.tool("abp", "Adblock Plus")}${this.tool("react", "React tools")}${this.tool("shot", "Screenshot")}${this.tool("puzzle", "Extensions")}
        <span class="rule"></span>
        ${this.tool("split", "Split screen")}${this.tool("favorites", "Favorites")}${this.tool("collections", "Collections")}${this.tool("download", "Downloads")}${this.tool("heart", "Browser essentials")}${this.tool("dots", "Settings and more")}
        ${this.tool("bing", "Bing", "bing")}
      </div>
      <div class="body">
        <div class="frame">
          <trace-page></trace-page>
          <div class="scroll">${icons.arrowUp}<div class="track"><div class="thumb"></div></div>${icons.arrowDown}</div>
        </div>
        <aside class="side">
          ${this.tool("sideSearch", "Search", "")}${this.tool("m365", "Microsoft 365", "")}${this.tool("outlook", "Outlook", "")}${this.tool("sidePlus", "Customize", "add")}
          <span class="spacer"></span>
          <span class="line"></span>
          ${this.tool("panel", "Hide sidebar", "")}${this.tool("external", "Open in new window", "")}${this.tool("gear", "Settings", "")}
        </aside>
      </div>
      <task-bar></task-bar>`;
  }
}
